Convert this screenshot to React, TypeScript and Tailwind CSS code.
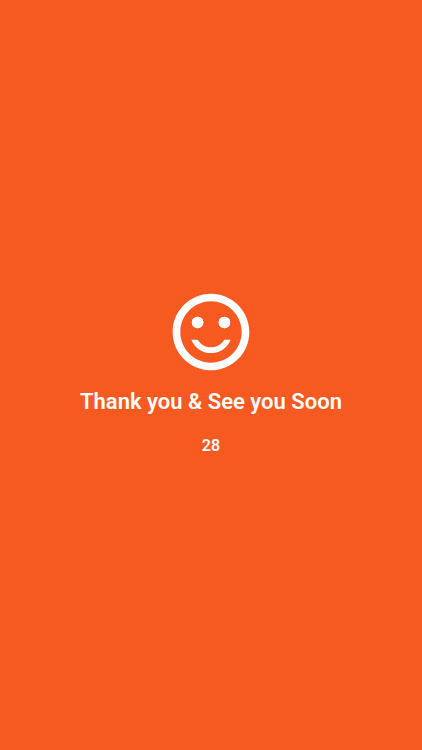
import { useState } from "react";
import { MdSentimentSatisfiedAlt } from "react-icons/md";

export default function App() {
  const [secondsLeft] = useState(28);

  return (
    <main className="flex min-h-screen flex-col items-center justify-center bg-[#f65a20] px-4 pb-1.5 font-['Roboto',sans-serif] text-white">
      <MdSentimentSatisfiedAlt className="size-23" aria-hidden="true" />
      <h1 className="mt-2 text-center text-[22px] leading-8 font-semibold">Thank you &amp; See you Soon</h1>
      <p className="mt-4 text-base font-semibold">{secondsLeft}</p>
    </main>
  );
}
